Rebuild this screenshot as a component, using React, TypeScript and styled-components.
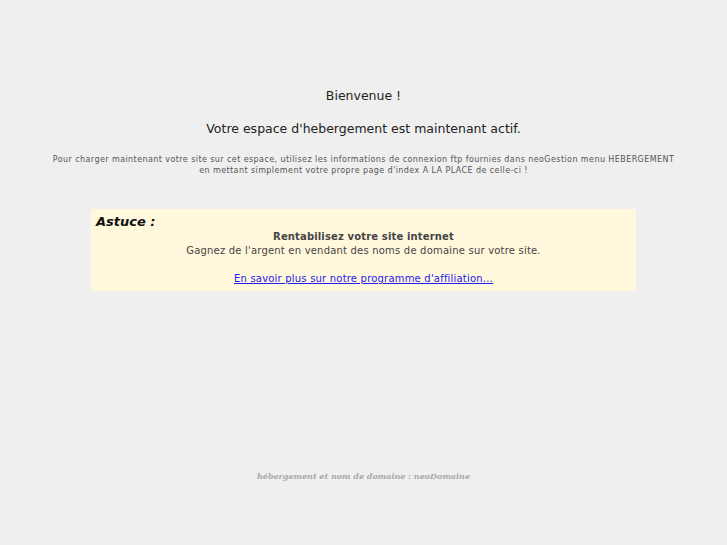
import React from "react";
import styled, { createGlobalStyle } from "styled-components";

const Global = createGlobalStyle`
  html, body { margin: 0; padding: 0; background: #efefef; }
  body { font-family: "DejaVu Sans", Verdana, sans-serif; }
`;

const Page = styled.div`
  display: flex;
  flex-direction: column;
  align-items: center;
  padding-top: 88px;
`;

const Title = styled.div`
  font-size: 12.5px;
  color: #222;
  line-height: 16px;
  text-align: center;
`;

const Subtitle = styled(Title)`
  margin-top: 17px;
`;

const Info = styled.div`
  margin-top: 17px;
  font-size: 8px;
  line-height: 11px;
  letter-spacing: 0.42px;
  color: #555;
  text-align: center;
`;

const Tip = styled.div`
  margin-top: 33px;
  width: 545px;
  box-sizing: border-box;
  background: #fff8dd;
  padding: 5px 5px 5px;
`;

const TipTitle = styled.div`
  font-size: 13px;
  font-weight: bold;
  font-style: italic;
  color: #111;
  line-height: 16px;
`;

const TipBody = styled.div`
  text-align: center;
  font-size: 10px;
  line-height: 14px;
  letter-spacing: 0.2px;
  color: #444;
`;

const Strong = styled.div`
  font-weight: bold;
  letter-spacing: 0.15px;
`;

const Link = styled.a`
  color: #2222ee;
  text-decoration: underline;
`;

const Footer = styled.div`
  margin-top: 180px;
  font-family: "DejaVu Serif", serif;
  font-size: 8px;
  font-weight: bold;
  font-style: italic;
  color: #a8a8a8;
  text-align: center;
`;

export default function App() {
  return (
    <>
      <Global />
      <Page>
        <Title>Bienvenue !</Title>
        <Subtitle>Votre espace d'hebergement est maintenant actif.</Subtitle>
        <Info>
          Pour charger maintenant votre site sur cet espace, utilisez les informations de connexion ftp fournies dans neoGestion menu HEBERGEMENT
          <br />
          en mettant simplement votre propre page d'index A LA PLACE de celle-ci !
        </Info>
        <Tip>
          <TipTitle>Astuce :</TipTitle>
          <TipBody>
            <Strong>Rentabilisez votre site internet</Strong>
            Gagnez de l'argent en vendant des noms de domaine sur votre site.
            <br />
            <br />
            <Link href="#">En savoir plus sur notre programme d'affiliation...</Link>
          </TipBody>
        </Tip>
        <Footer>hébergement et nom de domaine : neoDomaine</Footer>
      </Page>
    </>
  );
}
